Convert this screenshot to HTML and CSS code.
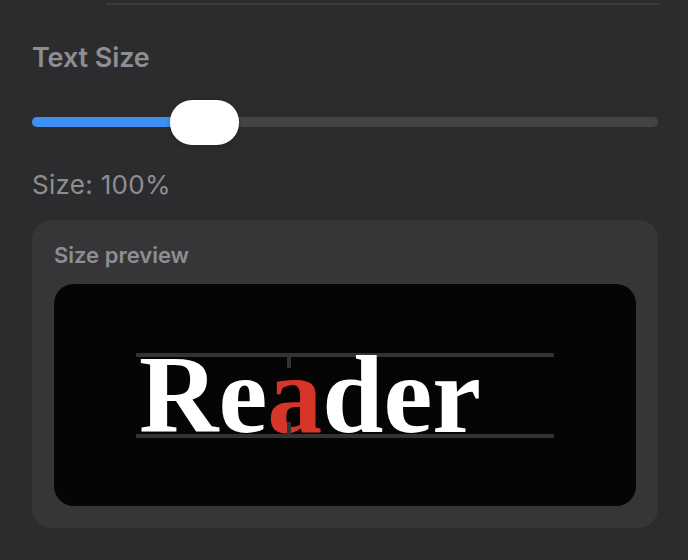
FILE: index.html
```html
<!DOCTYPE html>
<html>
<head>
<meta charset="utf-8">
<link rel="stylesheet" href="styles.css">
</head>
<body>
<div class="divider"></div>
<section class="settings">
  <h2 class="title">Text Size</h2>
  <div class="slider">
    <div class="track">
      <div class="fill"></div>
      <div class="thumb"></div>
    </div>
  </div>
  <p class="value">Size: 100%</p>
  <div class="card">
    <div class="card-label">Size preview</div>
    <div class="preview">
      <div class="guide">
        <span class="word">Re<span class="accent">a</span>der</span>
      </div>
    </div>
  </div>
</section>
</body>
</html>
```

FILE: styles.css
```css
html, body {
  margin: 0;
  padding: 0;
  background: #2c2c2e;
}
body {
  width: 688px;
  height: 560px;
  overflow: hidden;
  font-family: "Inter", "Roboto", sans-serif;
}
.divider {
  height: 2px;
  background: #3b3b3d;
  margin: 3px 29px 0 106px;
}
.settings {
  padding: 0 30px 0 32px;
}
.title {
  margin: 0;
  padding-top: 37px;
  font-size: 27px;
  line-height: 32px;
  font-weight: 600;
  color: #8e8e92;
  letter-spacing: -0.1px;
}
.slider {
  margin-top: 25px;
  height: 45px;
  display: flex;
  align-items: center;
}
.track {
  position: relative;
  flex: 1;
  height: 10px;
  border-radius: 5px;
  background: #444446;
}
.fill {
  width: 170px;
  height: 100%;
  border-radius: 5px;
  background: #3d8ef5;
}
.thumb {
  position: absolute;
  left: 138px;
  top: -17px;
  width: 69px;
  height: 45px;
  border-radius: 22px;
  background: #ffffff;
  box-shadow: 0 1px 4px rgba(0,0,0,0.25);
}
.value {
  margin: 0;
  padding-top: 26px;
  font-size: 26px;
  line-height: 30px;
  font-weight: 400;
  color: #8e8e92;
  letter-spacing: 0.3px;
}
.card {
  margin-top: 20px;
  background: #363638;
  border-radius: 20px;
  padding: 22px 22px 22px 22px;
}
.card-label {
  font-size: 22px;
  line-height: 26px;
  font-weight: 600;
  color: #8e8e92;
  letter-spacing: 0;
}
.preview {
  margin-top: 16px;
  height: 222px;
  background: #050505;
  border-radius: 20px;
  display: flex;
  align-items: center;
  justify-content: center;
}
.guide {
  position: relative;
  box-sizing: border-box;
  width: 418px;
  height: 85px;
  border-top: 4px solid #333334;
  border-bottom: 4px solid #333334;
  padding-left: 3px;
}
.guide::before,
.guide::after {
  content: "";
  position: absolute;
  left: 151px;
  width: 4px;
  background: #333334;
  z-index: 2;
}
.guide::before {
  top: 0;
  height: 11px;
}
.guide::after {
  bottom: 0;
  height: 12px;
}
.word {
  display: block;
  font-family: "Liberation Serif", "Times New Roman", serif;
  font-weight: 700;
  font-size: 110px;
  line-height: 76px;
  color: #ffffff;
  letter-spacing: 0;
}
.accent {
  color: #d6352a;
}
```
